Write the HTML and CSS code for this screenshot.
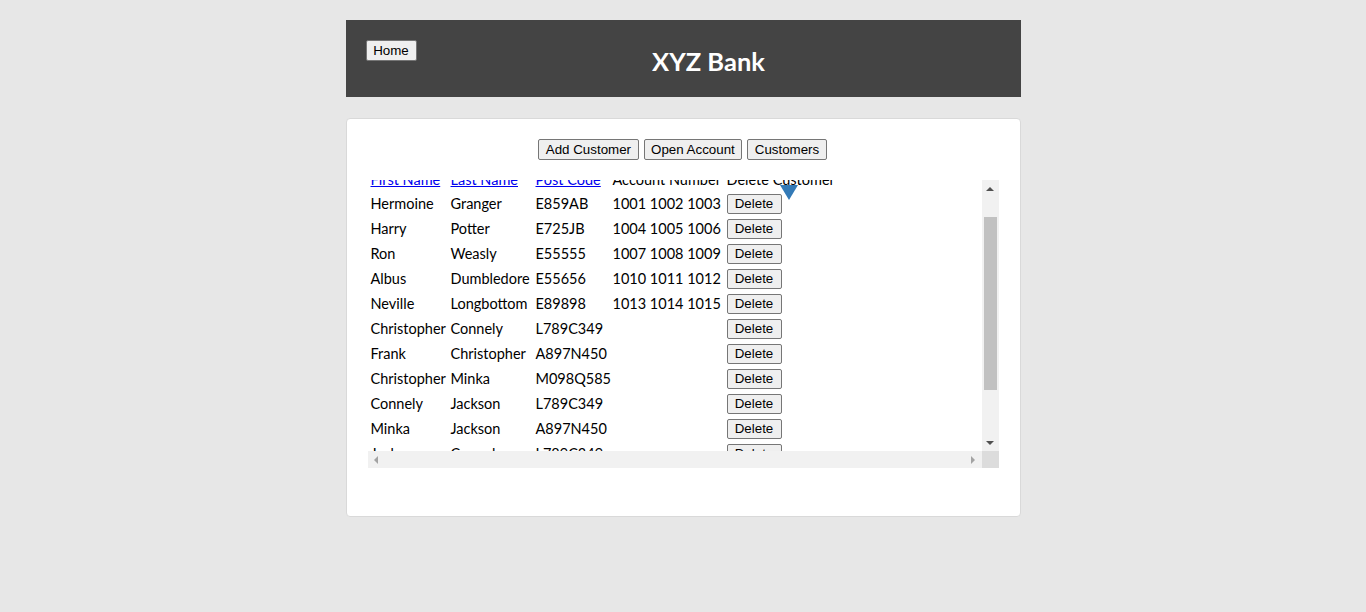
FILE: index.html
```html
<!DOCTYPE html>
<html>
<head>
<meta charset="utf-8">
<title>XYZ Bank</title>
<link rel="stylesheet" href="styles.css">
</head>
<body>
<div class="page">
  <header class="topbar">
    <button class="btn home">Home</button>
    <h2 class="title">XYZ Bank</h2>
  </header>
  <main class="card">
    <div class="tabs">
      <button class="btn tab">Add Customer</button>
      <button class="btn tab">Open Account</button>
      <button class="btn tab">Customers</button>
    </div>
    <div class="scrollbox">
      <div class="viewport" id="viewport">
        <div class="search"></div>
        <table class="grid">
          <colgroup>
            <col class="c1"><col class="c2"><col class="c3"><col class="c4"><col class="c5">
          </colgroup>
          <thead>
            <tr>
              <td><a href="#">First Name</a></td>
              <td><a href="#">Last Name</a></td>
              <td><a href="#">Post Code</a></td>
              <td>Account Number</td>
              <td class="delhead">Delete Customer<span class="sortarrow"></span></td>
            </tr>
          </thead>
          <tbody>
            <tr><td>Hermoine</td><td>Granger</td><td>E859AB</td><td>1001 1002 1003</td><td><button class="btn">Delete</button></td></tr>
            <tr><td>Harry</td><td>Potter</td><td>E725JB</td><td>1004 1005 1006</td><td><button class="btn">Delete</button></td></tr>
            <tr><td>Ron</td><td>Weasly</td><td>E55555</td><td>1007 1008 1009</td><td><button class="btn">Delete</button></td></tr>
            <tr><td>Albus</td><td>Dumbledore</td><td>E55656</td><td>1010 1011 1012</td><td><button class="btn">Delete</button></td></tr>
            <tr><td>Neville</td><td>Longbottom</td><td>E89898</td><td>1013 1014 1015</td><td><button class="btn">Delete</button></td></tr>
            <tr><td>Christopher</td><td>Connely</td><td>L789C349</td><td></td><td><button class="btn">Delete</button></td></tr>
            <tr><td>Frank</td><td>Christopher</td><td>A897N450</td><td></td><td><button class="btn">Delete</button></td></tr>
            <tr><td>Christopher</td><td>Minka</td><td>M098Q585</td><td></td><td><button class="btn">Delete</button></td></tr>
            <tr><td>Connely</td><td>Jackson</td><td>L789C349</td><td></td><td><button class="btn">Delete</button></td></tr>
            <tr><td>Minka</td><td>Jackson</td><td>A897N450</td><td></td><td><button class="btn">Delete</button></td></tr>
            <tr><td>Jackson</td><td>Connely</td><td>L789C349</td><td></td><td><button class="btn">Delete</button></td></tr>
            <tr><td>Jackson</td><td>Frank</td><td>A897N450</td><td></td><td><button class="btn">Delete</button></td></tr>
            <tr><td>Minka</td><td>Christopher</td><td>M098Q585</td><td></td><td><button class="btn">Delete</button></td></tr>
          </tbody>
        </table>
      </div>
      <div class="vbar">
        <div class="sbtn"><span class="tri up"></span></div>
        <div class="vtrack"><div class="vthumb"></div></div>
        <div class="sbtn"><span class="tri down"></span></div>
      </div>
      <div class="hbar">
        <div class="sbtn"><span class="tri left"></span></div>
        <div class="htrack"></div>
        <div class="sbtn"><span class="tri right"></span></div>
      </div>
      <div class="corner"></div>
    </div>
  </main>
</div>
<script src="script.js"></script>
</body>
</html>
```
FILE: styles.css
```css
html, body {
  margin: 0;
  padding: 0;
  background: #e7e7e7;
}
body {
  font-family: Lato, "Open Sans", sans-serif;
  font-size: 14.5px;
  color: #000;
}
.page {
  width: 675px;
  margin: 20px auto 0;
}
.topbar {
  background: #444444;
  height: 77px;
  box-sizing: border-box;
  padding: 20px 20px 0 20px;
  display: flex;
  align-items: flex-start;
}
.title {
  flex: 1;
  margin: 4px 0 0 0;
  text-align: center;
  color: #fff;
  font-family: Lato, sans-serif;
  font-weight: 700;
  font-size: 25.5px;
  line-height: 34px;
}
.btn {
  font-family: "Liberation Sans", Arial, sans-serif;
  font-size: 13.33px;
  color: #000;
  background: #efefef;
  border: 1px solid #767676;
  border-radius: 2px;
  padding: 1px 6px;
  height: 21px;
  line-height: 17px;
  box-sizing: border-box;
  margin: 0;
}
.tab {
  padding: 1px 6.5px;
}
.home {
  width: 51px;
  height: 21px;
  padding: 0;
}
.card {
  margin-top: 21px;
  background: #fff;
  border: 1px solid #d9d9d9;
  border-radius: 4px;
  height: 399px;
  box-sizing: border-box;
  padding: 20px 21px 0 21px;
}
.tabs {
  display: flex;
  justify-content: center;
  gap: 5px;
  padding-right: 1px;
}
.scrollbox {
  margin-top: 20px;
  width: 631px;
  height: 288px;
  display: grid;
  grid-template-columns: 614px 17px;
  grid-template-rows: 271px 17px;
}
.viewport {
  overflow: hidden;
  background: #fff;
}
.search {
  height: 20px;
}
.grid {
  table-layout: fixed;
  border-collapse: collapse;
  margin-left: 3px;
  width: 600px;
}
.c1 { width: 80px; }
.c2 { width: 85px; }
.c3 { width: 77px; }
.c4 { width: 114px; }
.c5 { width: 244px; }
.grid td {
  padding: 0;
  height: 25px;
  white-space: nowrap;
  vertical-align: middle;
  line-height: 18px;
}
.grid tbody td {
  padding-bottom: 1px;
  height: 24px;
}
.grid a {
  color: #0000ee;
  text-decoration: underline;
}
.grid .btn {
  height: 20px;
  width: 55px;
  padding: 0;
  line-height: 16px;
}
.delhead {
  position: relative;
}
.sortarrow {
  position: absolute;
  left: 53px;
  top: 18px;
  width: 0;
  height: 0;
  border-left: 9px solid transparent;
  border-right: 9px solid transparent;
  border-top: 15px solid #337ab7;
}
.vbar {
  background: #f1f1f1;
  display: flex;
  flex-direction: column;
}
.hbar {
  background: #f1f1f1;
  display: flex;
}
.corner {
  background: #dcdcdc;
}
.sbtn {
  width: 17px;
  height: 17px;
  flex: none;
  display: flex;
  align-items: center;
  justify-content: center;
}
.vtrack {
  flex: 1;
  padding: 20px 2px 0 2px;
}
.vthumb {
  height: 173px;
  background: #c1c1c1;
}
.htrack {
  flex: 1;
}
.tri {
  width: 0;
  height: 0;
  display: block;
}
.tri.up {
  border-left: 4px solid transparent;
  border-right: 4px solid transparent;
  border-bottom: 4px solid #505050;
}
.tri.down {
  border-left: 4px solid transparent;
  border-right: 4px solid transparent;
  border-top: 4px solid #505050;
}
.tri.left {
  border-top: 4px solid transparent;
  border-bottom: 4px solid transparent;
  border-right: 4px solid #a3a3a3;
}
.tri.right {
  border-top: 4px solid transparent;
  border-bottom: 4px solid transparent;
  border-left: 4px solid #a3a3a3;
}
```
FILE: script.js
```js
document.getElementById('viewport').scrollTop = 33;
```
